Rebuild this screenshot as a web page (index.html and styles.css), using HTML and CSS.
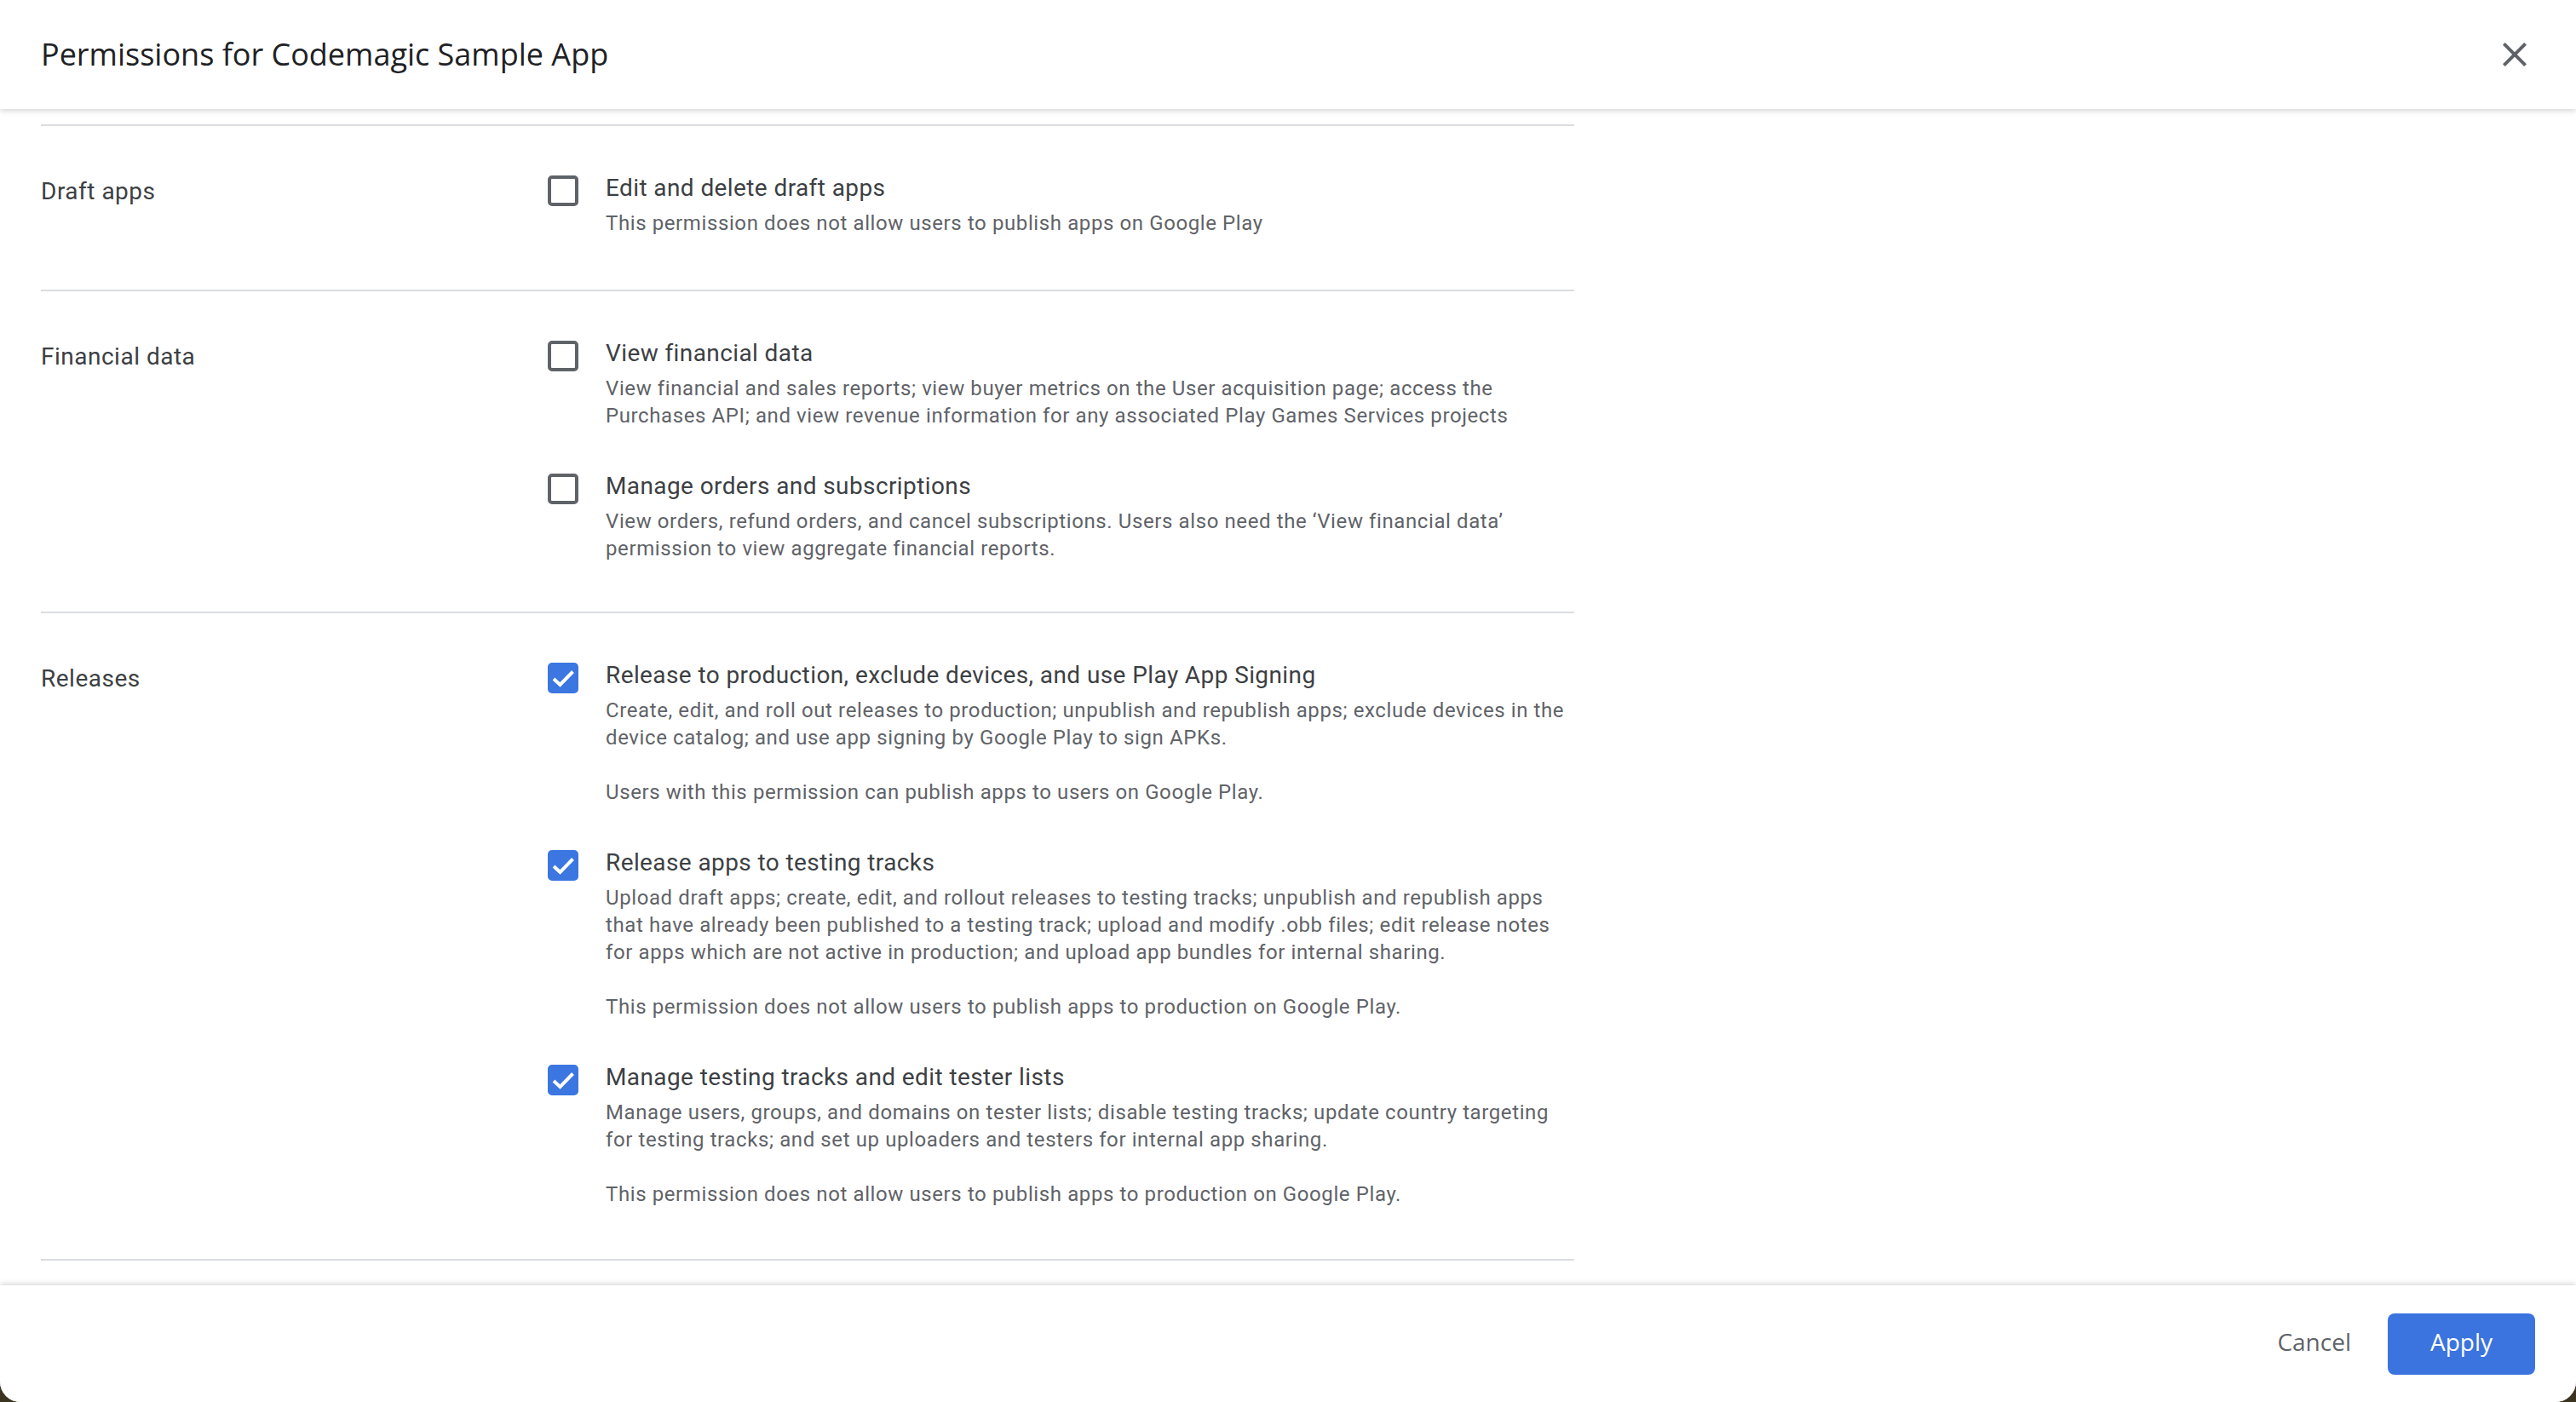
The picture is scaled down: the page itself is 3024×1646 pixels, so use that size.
FILE: index.html
```html
<!DOCTYPE html>
<html lang="en">
<head>
<meta charset="utf-8">
<title>Permissions for Codemagic Sample App</title>
<link rel="stylesheet" href="styles.css">
</head>
<body>
<div class="dialog">
  <header class="dlg-header">
    <h1 class="dlg-title">Permissions for Codemagic Sample App</h1>
    <button class="icon-btn" aria-label="Close">
      <svg viewBox="0 0 24 24" width="48" height="48"><path fill="#5f6368" d="M19 6.41L17.59 5 12 10.59 6.41 5 5 6.41 10.59 12 5 17.59 6.41 19 12 13.41 17.59 19 19 17.59 13.41 12z"/></svg>
    </button>
  </header>

  <main class="dlg-body">
    <div class="perm-list">
      <section class="perm-row">
        <div class="perm-label">Draft apps</div>
        <div class="perm-items">
          <div class="perm-item">
            <span class="cb"></span>
            <div class="perm-text">
              <div class="perm-title">Edit and delete draft apps</div>
              <p class="perm-desc">This permission does not allow users to publish apps on Google Play</p>
            </div>
          </div>
        </div>
      </section>

      <section class="perm-row">
        <div class="perm-label">Financial data</div>
        <div class="perm-items">
          <div class="perm-item">
            <span class="cb"></span>
            <div class="perm-text">
              <div class="perm-title">View financial data</div>
              <p class="perm-desc">View financial and sales reports; view buyer metrics on the User acquisition page; access the Purchases API; and view revenue information for any associated Play Games Services projects</p>
            </div>
          </div>
          <div class="perm-item">
            <span class="cb"></span>
            <div class="perm-text">
              <div class="perm-title">Manage orders and subscriptions</div>
              <p class="perm-desc">View orders, refund orders, and cancel subscriptions. Users also need the ‘View financial data’ permission to view aggregate financial reports.</p>
            </div>
          </div>
        </div>
      </section>

      <section class="perm-row">
        <div class="perm-label">Releases</div>
        <div class="perm-items">
          <div class="perm-item">
            <span class="cb checked"><svg viewBox="0 0 36 36" width="36" height="36"><path fill="none" stroke="#fff" stroke-width="4" d="M7 19l7.5 7L29.5 10.5"/></svg></span>
            <div class="perm-text">
              <div class="perm-title">Release to production, exclude devices, and use Play App Signing</div>
              <p class="perm-desc">Create, edit, and roll out releases to production; unpublish and republish apps; exclude devices in the device catalog; and use app signing by Google Play to sign APKs.</p>
              <p class="perm-desc perm-note">Users with this permission can publish apps to users on Google Play.</p>
            </div>
          </div>
          <div class="perm-item">
            <span class="cb checked"><svg viewBox="0 0 36 36" width="36" height="36"><path fill="none" stroke="#fff" stroke-width="4" d="M7 19l7.5 7L29.5 10.5"/></svg></span>
            <div class="perm-text">
              <div class="perm-title">Release apps to testing tracks</div>
              <p class="perm-desc">Upload draft apps; create, edit, and rollout releases to testing tracks; unpublish and republish apps that have already been published to a testing track; upload and modify .obb files; edit release notes for apps which are not active in production; and upload app bundles for internal sharing.</p>
              <p class="perm-desc perm-note">This permission does not allow users to publish apps to production on Google Play.</p>
            </div>
          </div>
          <div class="perm-item">
            <span class="cb checked"><svg viewBox="0 0 36 36" width="36" height="36"><path fill="none" stroke="#fff" stroke-width="4" d="M7 19l7.5 7L29.5 10.5"/></svg></span>
            <div class="perm-text">
              <div class="perm-title">Manage testing tracks and edit tester lists</div>
              <p class="perm-desc">Manage users, groups, and domains on tester lists; disable testing tracks; update country targeting for testing tracks; and set up uploaders and testers for internal app sharing.</p>
              <p class="perm-desc perm-note">This permission does not allow users to publish apps to production on Google Play.</p>
            </div>
          </div>
        </div>
      </section>
    </div>
  </main>

  <footer class="dlg-footer">
    <button class="btn btn-text">Cancel</button>
    <button class="btn btn-primary">Apply</button>
  </footer>
</div>
</body>
</html>
```

FILE: styles.css
```css
* { box-sizing: border-box; }

html, body {
  margin: 0;
  height: 100%;
}

body {
  background: #3a3420;
  font-family: Roboto, "Noto Sans", "Liberation Sans", sans-serif;
  overflow: hidden;
}

.dialog {
  width: 3024px;
  height: 1646px;
  background: #fff;
  border-radius: 0 0 24px 24px;
  overflow: hidden;
  display: flex;
  flex-direction: column;
}

/* Header */
.dlg-header {
  flex: 0 0 128px;
  display: flex;
  align-items: center;
  justify-content: space-between;
  padding: 0 48px;
  background: #fff;
  position: relative;
  z-index: 2;
  box-shadow: 0 2px 6px rgba(60, 64, 67, 0.22);
}

.dlg-title {
  margin: 0;
  font-family: "Open Sans", Roboto, sans-serif;
  font-weight: 500;
  font-size: 36px;
  line-height: 48px;
  color: #202124;
  letter-spacing: 0;
}

.icon-btn {
  width: 48px;
  height: 48px;
  padding: 0;
  border: 0;
  background: none;
  display: flex;
  align-items: center;
  justify-content: center;
}

/* Body */
.dlg-body {
  flex: 1 1 auto;
  overflow: hidden;
  position: relative;
  z-index: 1;
}

.perm-list {
  width: 1800px;
  margin: 18px 0 0 48px;
  border-top: 2px solid #dadce0;
}

.perm-row {
  display: flex;
  padding: 53px 0 58px;
  border-bottom: 2px solid #dadce0;
}

.perm-row:first-child {
  padding-bottom: 62px;
}

.perm-row:last-child {
  padding-bottom: 60px;
}

.perm-label {
  flex: 0 0 595px;
  font-size: 28px;
  line-height: 40px;
  margin-top: 4px;
  color: #3c4043;
  letter-spacing: 0.5px;
}

.perm-items {
  flex: 1;
  display: flex;
  flex-direction: column;
  gap: 47px;
}

.perm-item {
  display: flex;
  align-items: flex-start;
}

.cb {
  flex: 0 0 36px;
  width: 36px;
  height: 36px;
  margin-top: 5px;
  margin-right: 32px;
  border: 4px solid #5f6368;
  border-radius: 5px;
  display: flex;
  align-items: center;
  justify-content: center;
}

.cb.checked {
  background: #3b76e1;
  border-color: #3b76e1;
}

.cb.checked svg {
  flex: 0 0 auto;
}

.perm-text {
  flex: 1;
  min-width: 0;
}

.perm-title {
  font-size: 28px;
  line-height: 40px;
  color: #3c4043;
  letter-spacing: 0.4px;
}

.perm-desc {
  margin: 5px 0 0;
  font-size: 24px;
  line-height: 32px;
  color: #5f6368;
  letter-spacing: 0.6px;
}

.perm-desc.perm-note {
  margin-top: 32px;
}

/* Footer */
.dlg-footer {
  flex: 0 0 137px;
  display: flex;
  align-items: flex-start;
  justify-content: flex-end;
  padding: 33px 48px 0;
  background: #fff;
  position: relative;
  z-index: 2;
  box-shadow: 0 -2px 6px rgba(60, 64, 67, 0.2);
}

.btn {
  height: 72px;
  border: 0;
  border-radius: 8px;
  font-family: "Open Sans", Roboto, sans-serif;
  font-weight: 500;
  font-size: 28px;
  line-height: 36px;
  padding-bottom: 7px;
  cursor: pointer;
}

.btn-text {
  background: none;
  color: #5f6368;
  padding-left: 32px;
  padding-right: 32px;
  margin-right: 11px;
}

.btn-primary {
  background: #3b74df;
  color: #fff;
  width: 173px;
  padding-left: 0;
  padding-right: 0;
}
```
